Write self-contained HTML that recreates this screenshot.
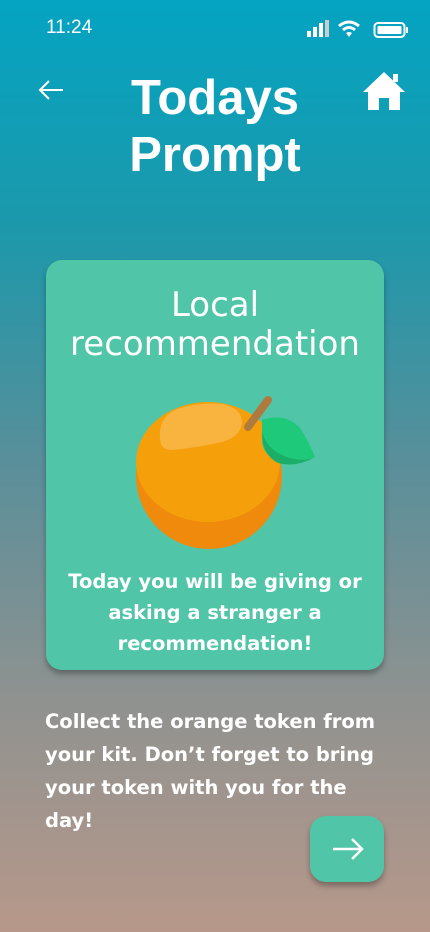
<!DOCTYPE html>
<html><head><meta charset="utf-8"><style>
*{margin:0;padding:0;box-sizing:border-box}
body{width:430px;height:932px;overflow:hidden;font-family:"Liberation Sans",sans-serif;color:#fff;
background:linear-gradient(180deg,#04a4c2 0%,#1d98aa 25%,#5a8f9a 50%,#8f9290 75%,#b7988a 100%);position:relative}
.abs{position:absolute}
.title{left:0;width:430px;top:70px;text-align:center;font-weight:700;font-size:49px;line-height:57px}
.card{left:46px;top:260px;width:338px;height:410px;background:#50c5a8;border-radius:16px;box-shadow:0 4px 6px rgba(0,0,0,.3)}
.card h2{position:absolute;top:26px;width:100%;text-align:center;font-family:"DejaVu Sans",sans-serif;font-weight:400;font-size:34px;line-height:39px;white-space:nowrap}
.card p{position:absolute;top:566px;top:306px;width:100%;text-align:center;font-family:"DejaVu Sans",sans-serif;font-weight:700;font-size:19.5px;line-height:31px;white-space:nowrap}
.desc{left:45px;top:705px;width:380px;font-family:"DejaVu Sans",sans-serif;font-weight:700;font-size:19.5px;line-height:33px;white-space:nowrap}
.btn{left:310px;top:816px;width:74px;height:66px;background:#50c5a8;border-radius:16px;box-shadow:0 4px 6px rgba(0,0,0,.3)}
</style></head><body>
<div class="abs" style="left:46px;top:17px;font-size:19px">11:24</div>
<svg class="abs" style="left:305px;top:18px" width="104" height="22" viewBox="0 0 104 22">
<rect x="2" y="13" width="4" height="6" fill="#fff"/><rect x="8" y="9" width="4" height="10" fill="#fff"/><rect x="14" y="5" width="4" height="14" fill="#fff"/><rect x="20" y="2" width="4" height="17" fill="#ccc"/>
<path d="M34 8 Q44 0 54 8" stroke="#fff" stroke-width="3" fill="none"/><path d="M38 12 Q44 7 50 12" stroke="#fff" stroke-width="3" fill="none"/><path d="M41 15 L44 19 L47 15 Q44 13 41 15Z" fill="#fff"/>
<rect x="69.5" y="5" width="30" height="14" rx="3.5" stroke="#fff" stroke-width="2" fill="none"/><rect x="72.5" y="8" width="24" height="8" rx="1" fill="#fff"/><rect x="101" y="9" width="2" height="6" fill="#fff"/>
</svg>
<svg class="abs" style="left:36px;top:78px" width="30" height="24" viewBox="0 0 30 24"><path d="M27 12H4M13 3L4 12L13 21" stroke="#fff" stroke-width="2" fill="none"/></svg>
<svg class="abs" style="left:362px;top:70px" width="44" height="42" viewBox="0 0 44 42"><path d="M22 2L1 22H6V40H17V28H27V40H38V22H43Z" fill="#fff"/><rect x="31" y="4" width="5" height="8" fill="#fff"/></svg>
<div class="abs title">Todays<br>Prompt</div>
<div class="abs card">
<h2>Local<br>recommendation</h2>
<svg class="abs" style="left:80px;top:130px" width="200" height="165" viewBox="126 390 200 165">
<circle cx="209" cy="476" r="73" fill="#ef8a0c"/>
<ellipse cx="208" cy="462" rx="72" ry="60" fill="#f5a00a"/>
<path d="M160 440 Q158 418 175 410 Q195 402 222 404 Q242 408 242 423 Q240 437 222 442 Q195 448 172 450 Q161 450 160 440Z" fill="#f8b43e"/>
<path d="M248 427 L268 400" stroke="#b07a3e" stroke-width="8" stroke-linecap="round"/>
<path d="M262 420 Q285 412 300 428 Q308 440 315 457 Q296 466 280 462 Q262 455 262 440Z" fill="#1fc97a"/>
<path d="M262 432 Q268 452 290 458 Q304 462 315 457 Q296 468 278 463 Q262 455 262 432Z" fill="#1aae68"/>
</svg>
<p>Today you will be giving or<br>asking a stranger a<br>recommendation!</p>
</div>
<div class="abs desc">Collect the orange token from<br>your kit. Don’t forget to bring<br>your token with you for the<br>day!</div>
<div class="abs btn"><svg style="position:absolute;left:21px;top:21px" width="34" height="24" viewBox="0 0 34 24"><path d="M2 12H31M21 2L31 12L21 22" stroke="#fff" stroke-width="2.5" fill="none"/></svg></div>
</body></html>
